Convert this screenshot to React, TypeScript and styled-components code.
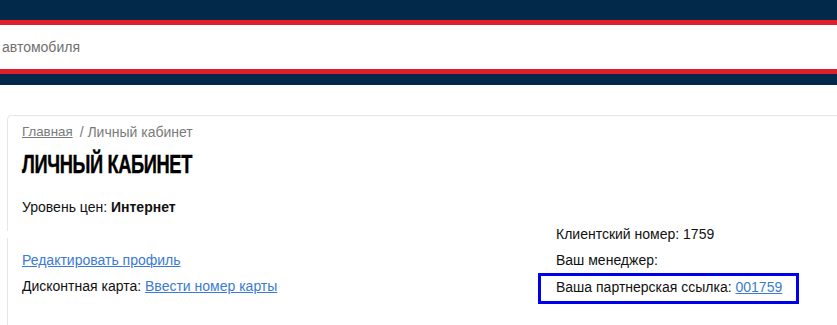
import React from "react";
import styled, { createGlobalStyle } from "styled-components";

const Global = createGlobalStyle`
  html, body { margin: 0; padding: 0; background: #fff; }
  body { font-family: "Liberation Sans", Arial, sans-serif; font-size: 14px; color: #111; }
`;

const Header = styled.header`
  display: flex;
  flex-direction: column;
`;

const NavyBar = styled.div<{ $h: number }>`
  height: ${(p) => p.$h}px;
  background: #03294a;
`;

const RedLine = styled.div`
  height: 5px;
  background: #e21d2b;
`;

const SearchStrip = styled.div`
  height: 44px;
  display: flex;
  align-items: center;
  padding-left: 2px;
  font-family: "Liberation Sans", Arial, sans-serif;
  font-size: 14px;
  color: #707070;
`;

const Main = styled.main`
  padding: 30px 0 0 7px;
  display: flex;
  flex-direction: column;
  gap: 7px;
`;

const Card = styled.section`
  border-top: 1px solid #e6e6e6;
  border-left: 1px solid #e6e6e6;
  border-top-left-radius: 5px;
  padding: 6px 14px 10px;
  height: 116px;
  box-sizing: border-box;
`;

const Crumbs = styled.nav`
  line-height: 20px;
  color: #7a7a7a;
  display: flex;
  gap: 7px;
`;

const CrumbLink = styled.a`
  color: #7a7a7a;
  text-decoration: underline;
  font-size: 13.3px;
`;

const Title = styled.h1`
  margin: 6px 0 0;
  font-family: "Liberation Sans", Arial, sans-serif;
  font-weight: 700;
  font-size: 25px;
  line-height: 32px;
  color: #000;
  letter-spacing: -0.5px;
  transform: scaleX(0.73);
  transform-origin: left center;
  -webkit-text-stroke: 0.4px #000;
`;

const Line = styled.p`
  margin: 0;
  line-height: 26px;
`;

const PriceLine = styled(Line)`
  margin-top: 14px;
`;

const Section = styled.section`
  border-left: 1px solid #e6e6e6;
  padding: 0 14px 30px;
  display: grid;
  grid-template-columns: 516px 261px;
`;

const LeftCol = styled.div`
  padding-top: 9px;
`;

const RightCol = styled.div`
  margin-top: -17px;
`;

const InfoRow = styled.p`
  margin: 0;
  line-height: 26px;
  padding-left: 18px;
`;

const MarkedRow = styled.p`
  margin: 0;
  line-height: 22px;
  border: 3px solid #0000f0;
  padding: 0 0 3px 15px;
`;

const Link = styled.a`
  color: #3a7bd5;
  text-decoration: underline;
`;

const Bold = styled.b`
  font-weight: 700;
`;

export default function App() {
  return (
    <>
      <Global />
      <Header>
        <NavyBar $h={20} />
        <RedLine />
        <SearchStrip>автомобиля</SearchStrip>
        <RedLine />
        <NavyBar $h={11} />
      </Header>
      <Main>
        <Card>
          <Crumbs>
            <CrumbLink href="#">Главная</CrumbLink>
            <span>/ Личный кабинет</span>
          </Crumbs>
          <Title>ЛИЧНЫЙ КАБИНЕТ</Title>
          <PriceLine>
            Уровень цен: <Bold>Интернет</Bold>
          </PriceLine>
        </Card>
        <Section>
          <LeftCol>
            <Line>
              <Link href="#">Редактировать профиль</Link>
            </Line>
            <Line>
              Дисконтная карта: <Link href="#">Ввести номер карты</Link>
            </Line>
          </LeftCol>
          <RightCol>
            <InfoRow>Клиентский номер: 1759</InfoRow>
            <InfoRow>Ваш менеджер:</InfoRow>
            <MarkedRow>
              Ваша партнерская ссылка: <Link href="#">001759</Link>
            </MarkedRow>
          </RightCol>
        </Section>
      </Main>
    </>
  );
}
